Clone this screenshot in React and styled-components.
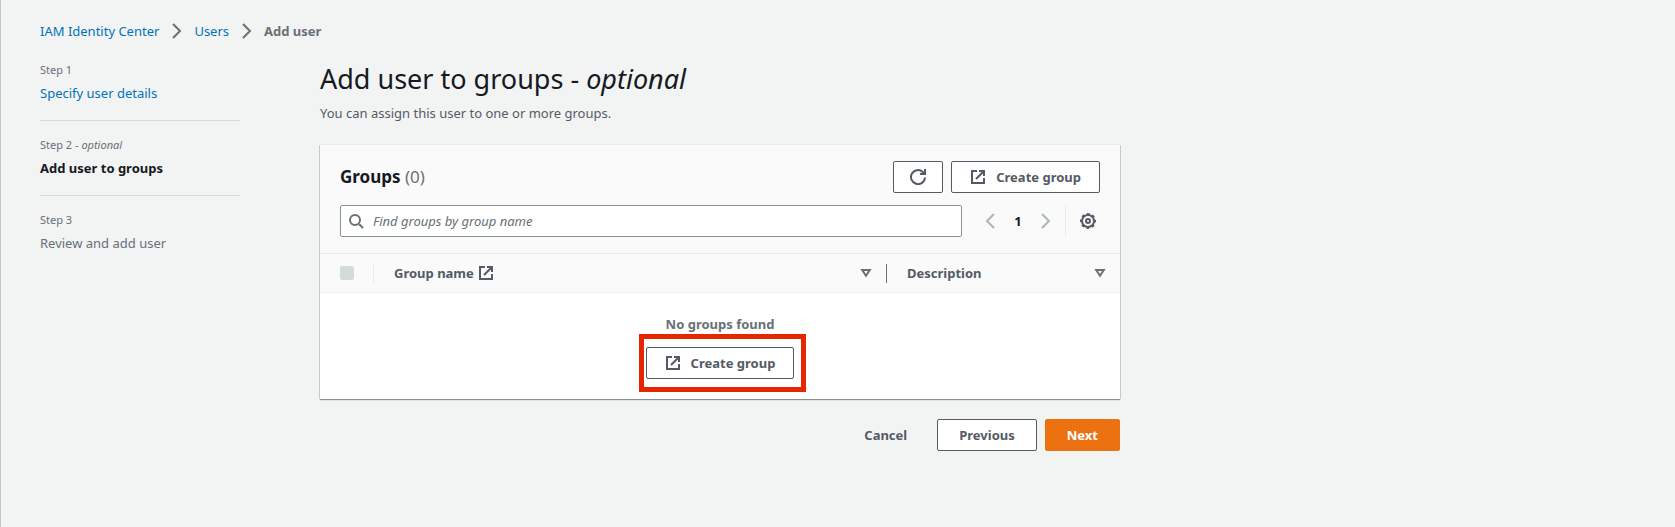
import React from "react";
import styled, { createGlobalStyle, css } from "styled-components";

const GlobalStyle = createGlobalStyle`
  * { box-sizing: border-box; }
  body {
    margin: 0;
    background: #f2f3f3;
    color: #16191f;
    font: 13px/22px "Noto Sans", sans-serif;
  }
  button, input { font: inherit; }
`;

const Page = styled.div`
  min-height: 100vh;
  padding: 20px 39px;
  border-left: 1px solid #c3c8c8;
`;

const Link = styled.a`
  color: #0073bb;
  text-decoration: none;
  &:hover { text-decoration: underline; }
`;

const Crumbs = styled.ol`
  display: flex;
  align-items: center;
  gap: 9px;
  margin: 0 0 18px;
  padding: 0;
  list-style: none;
  li { display: flex; align-items: center; gap: 10px; }
`;

const CurrentCrumb = styled.span`
  color: #687078;
  font-weight: 700;
`;

const Columns = styled.div`
  display: grid;
  grid-template-columns: 200px minmax(0, 800px);
  column-gap: 80px;
`;

const Steps = styled.ol`
  margin: 0;
  padding: 0;
  list-style: none;
`;

const Step = styled.li`
  padding-bottom: 16px;
  color: #687078;
  & + & { padding-top: 14px; border-top: 1px solid #d5dbdb; }
`;

const StepLabel = styled.div`
  font-size: 11px;
  line-height: 20px;
`;

const StepTitle = styled.div`
  padding-top: 2px;
  ${(p) => p.$current && css`
    color: #16191f;
    font-weight: 700;
  `}
`;

const Title = styled.h1`
  margin: 0;
  font-size: 27px;
  line-height: 38px;
  font-weight: 400;
`;

const Lead = styled.p`
  margin: 4px 0 21px;
  color: #545b64;
`;

const Card = styled.section`
  background: #fff;
  box-shadow: 0 1px 1px #879196, 1px 0 0 #d0d5d5, -1px 0 0 #d0d5d5, 0 -1px 0 #eaeded;
`;

const CardHeader = styled.header`
  padding: 16px 20px;
  background: #fafafa;
  border-bottom: 1px solid #eaeded;
`;

const TitleRow = styled.div`
  display: flex;
  align-items: center;
  justify-content: space-between;
  margin-bottom: 12px;
`;

const CardTitle = styled.h2`
  margin: 0;
  font-size: 17px;
  line-height: 22px;
  font-weight: 700;
`;

const Count = styled.span`
  color: #687078;
  font-weight: 400;
`;

const Actions = styled.div`
  display: flex;
  justify-content: flex-end;
  gap: 8px;
`;

const variants = {
  normal: css`
    background: #fff;
    border-color: #545b64;
    color: #545b64;
  `,
  primary: css`
    background: #ec7211;
    border-color: #ec7211;
    color: #fff;
  `,
  link: css`
    background: transparent;
    border-color: transparent;
    color: #545b64;
  `,
};

const paddings = { text: 21, icon: 16, both: 18 };

const Button = styled.button`
  display: inline-flex;
  align-items: center;
  justify-content: center;
  gap: 10px;
  height: 32px;
  padding: 0 ${(p) => paddings[p.$content || "text"]}px;
  border: 1px solid;
  border-radius: 2px;
  font-weight: 700;
  white-space: nowrap;
  cursor: pointer;
  ${(p) => variants[p.$variant || "normal"]}
`;

const FilterRow = styled.div`
  display: flex;
  align-items: center;
`;

const Search = styled.label`
  flex: 1;
  display: flex;
  align-items: center;
  gap: 9px;
  height: 32px;
  padding: 0 7px;
  background: #fff;
  border: 1px solid #879596;
  border-radius: 2px;
  color: #687078;
`;

const SearchInput = styled.input`
  flex: 1;
  min-width: 0;
  padding: 0;
  border: 0;
  outline: 0;
  background: none;
  &::placeholder { color: #687078; opacity: 1; font-style: italic; }
`;

const Pager = styled.nav`
  display: flex;
  align-items: center;
  gap: 4px;
  margin: 0 7px 0 16px;
`;

const IconButton = styled.button`
  display: flex;
  align-items: center;
  justify-content: center;
  width: 24px;
  height: 32px;
  padding: 0;
  border: 0;
  background: none;
  color: ${(p) => (p.disabled ? "#aab7b8" : "#545b64")};
  font-weight: 700;
  ${(p) => p.$current && "color: #16191f;"}
`;

const Settings = styled.div`
  padding-left: 10px;
  border-left: 1px solid #eaeded;
`;

const Table = styled.table`
  width: 100%;
  table-layout: fixed;
  border-collapse: separate;
  border-spacing: 0;
`;

const Th = styled.th`
  width: ${(p) => p.$width};
  height: 39px;
  padding: 0;
  background: #fafafa;
  border-bottom: 1px solid #eaeded;
  color: #545b64;
  text-align: left;
`;

const HeadCell = styled.div`
  display: flex;
  align-items: center;
  gap: 4px;
  height: 19px;
  padding: 0 14px 0 20px;
  border-right: ${(p) => (p.$divider ? `1px solid ${p.$divider}` : "0")};
`;

const SortButton = styled.button`
  display: flex;
  margin-left: auto;
  padding: 0;
  border: 0;
  background: none;
  color: #687078;
`;

const Checkbox = styled.input`
  appearance: none;
  width: 14px;
  height: 14px;
  margin: 0;
  border-radius: 2px;
  background: #d5dbdb;
`;

const EmptyCell = styled.td`
  padding: 20px;
  text-align: center;
  color: #687078;
  font-weight: 700;
`;

const Highlight = styled.div`
  position: relative;
  width: fit-content;
  margin: 12px auto 0;
  &::after {
    content: "";
    position: absolute;
    inset: -13px -12px -13px -7px;
    border: 5px solid #e52600;
    pointer-events: none;
  }
`;

const Footer = styled(Actions)`
  margin-top: 20px;
`;

const Icon = ({ size = 16, children, width = 2, ...rest }) => (
  <svg width={size} height={size} viewBox="0 0 16 16" fill="none" stroke="currentColor" strokeWidth={width} aria-hidden="true" {...rest}>
    {children}
  </svg>
);

const External = () => (
  <Icon>
    <path d="M7 2H2v12h12V9" />
    <path d="M9 2h5v5M14 2 6 10" />
  </Icon>
);

const Chevron = ({ left, color }) => (
  <Icon color={color}>
    <path d={left ? "M12 1 5 8l7 7" : "M4 1l7 7-7 7"} />
  </Icon>
);

const Refresh = () => (
  <Icon>
    <path d="M15 8.5A7 7 0 1 1 12.8 3L15 5" />
    <path d="M15 0v5h-5" />
  </Icon>
);

const Magnifier = () => (
  <Icon>
    <circle cx="7" cy="7" r="5" />
    <path d="m11 11 4 4" />
  </Icon>
);

const Gear = () => (
  <Icon>
    <circle cx="8" cy="8" r="6" />
    <circle cx="8" cy="8" r="7.2" strokeWidth="1.6" strokeDasharray="2.83 2.825" strokeDashoffset="1.41" />
    <circle cx="8" cy="8" r="2" />
  </Icon>
);

const Triangle = () => (
  <svg width="12" height="10" viewBox="0 0 12 10" fill="none" stroke="currentColor" strokeWidth="2" aria-hidden="true">
    <path d="M2.2 2h7.6L6 7.8z" />
  </svg>
);

const CreateGroupButton = () => (
  <Button type="button" $content="both">
    <External />
    Create group
  </Button>
);

export default function App() {
  return (
    <Page>
      <GlobalStyle />
      <nav aria-label="Breadcrumbs">
        <Crumbs>
          <li><Link href="#center">IAM Identity Center</Link><Chevron color="#687078" /></li>
          <li><Link href="#users">Users</Link><Chevron color="#687078" /></li>
          <li><CurrentCrumb>Add user</CurrentCrumb></li>
        </Crumbs>
      </nav>
      <Columns>
        <nav aria-label="Steps">
          <Steps>
            <Step>
              <StepLabel>Step 1</StepLabel>
              <StepTitle><Link href="#details">Specify user details</Link></StepTitle>
            </Step>
            <Step>
              <StepLabel>Step 2 - <i>optional</i></StepLabel>
              <StepTitle $current>Add user to groups</StepTitle>
            </Step>
            <Step>
              <StepLabel>Step 3</StepLabel>
              <StepTitle>Review and add user</StepTitle>
            </Step>
          </Steps>
        </nav>
        <main>
          <Title>Add user to groups - <i>optional</i></Title>
          <Lead>You can assign this user to one or more groups.</Lead>
          <Card>
            <CardHeader>
              <TitleRow>
                <CardTitle>Groups <Count>(0)</Count></CardTitle>
                <Actions>
                  <Button type="button" $content="icon" aria-label="Refresh"><Refresh /></Button>
                  <CreateGroupButton />
                </Actions>
              </TitleRow>
              <FilterRow>
                <Search>
                  <Magnifier />
                  <SearchInput type="text" aria-label="Find groups" placeholder="Find groups by group name" />
                </Search>
                <Pager aria-label="Pagination">
                  <IconButton type="button" disabled aria-label="Previous page"><Chevron left /></IconButton>
                  <IconButton type="button" $current>1</IconButton>
                  <IconButton type="button" disabled aria-label="Next page"><Chevron /></IconButton>
                </Pager>
                <Settings>
                  <IconButton type="button" aria-label="Preferences"><Gear /></IconButton>
                </Settings>
              </FilterRow>
            </CardHeader>
            <Table>
              <thead>
                <tr>
                  <Th $width="54px">
                    <HeadCell $divider="#eaeded"><Checkbox type="checkbox" disabled aria-label="Select all groups" /></HeadCell>
                  </Th>
                  <Th>
                    <HeadCell $divider="#687078">
                      Group name <External />
                      <SortButton type="button" aria-label="Sort by group name"><Triangle /></SortButton>
                    </HeadCell>
                  </Th>
                  <Th $width="233px">
                    <HeadCell>
                      Description
                      <SortButton type="button" aria-label="Sort by description"><Triangle /></SortButton>
                    </HeadCell>
                  </Th>
                </tr>
              </thead>
              <tbody>
                <tr>
                  <EmptyCell colSpan={3}>
                    No groups found
                    <Highlight><CreateGroupButton /></Highlight>
                  </EmptyCell>
                </tr>
              </tbody>
            </Table>
          </Card>
          <Footer>
            <Button type="button" $variant="link">Cancel</Button>
            <Button type="button">Previous</Button>
            <Button type="button" $variant="primary">Next</Button>
          </Footer>
        </main>
      </Columns>
    </Page>
  );
}
